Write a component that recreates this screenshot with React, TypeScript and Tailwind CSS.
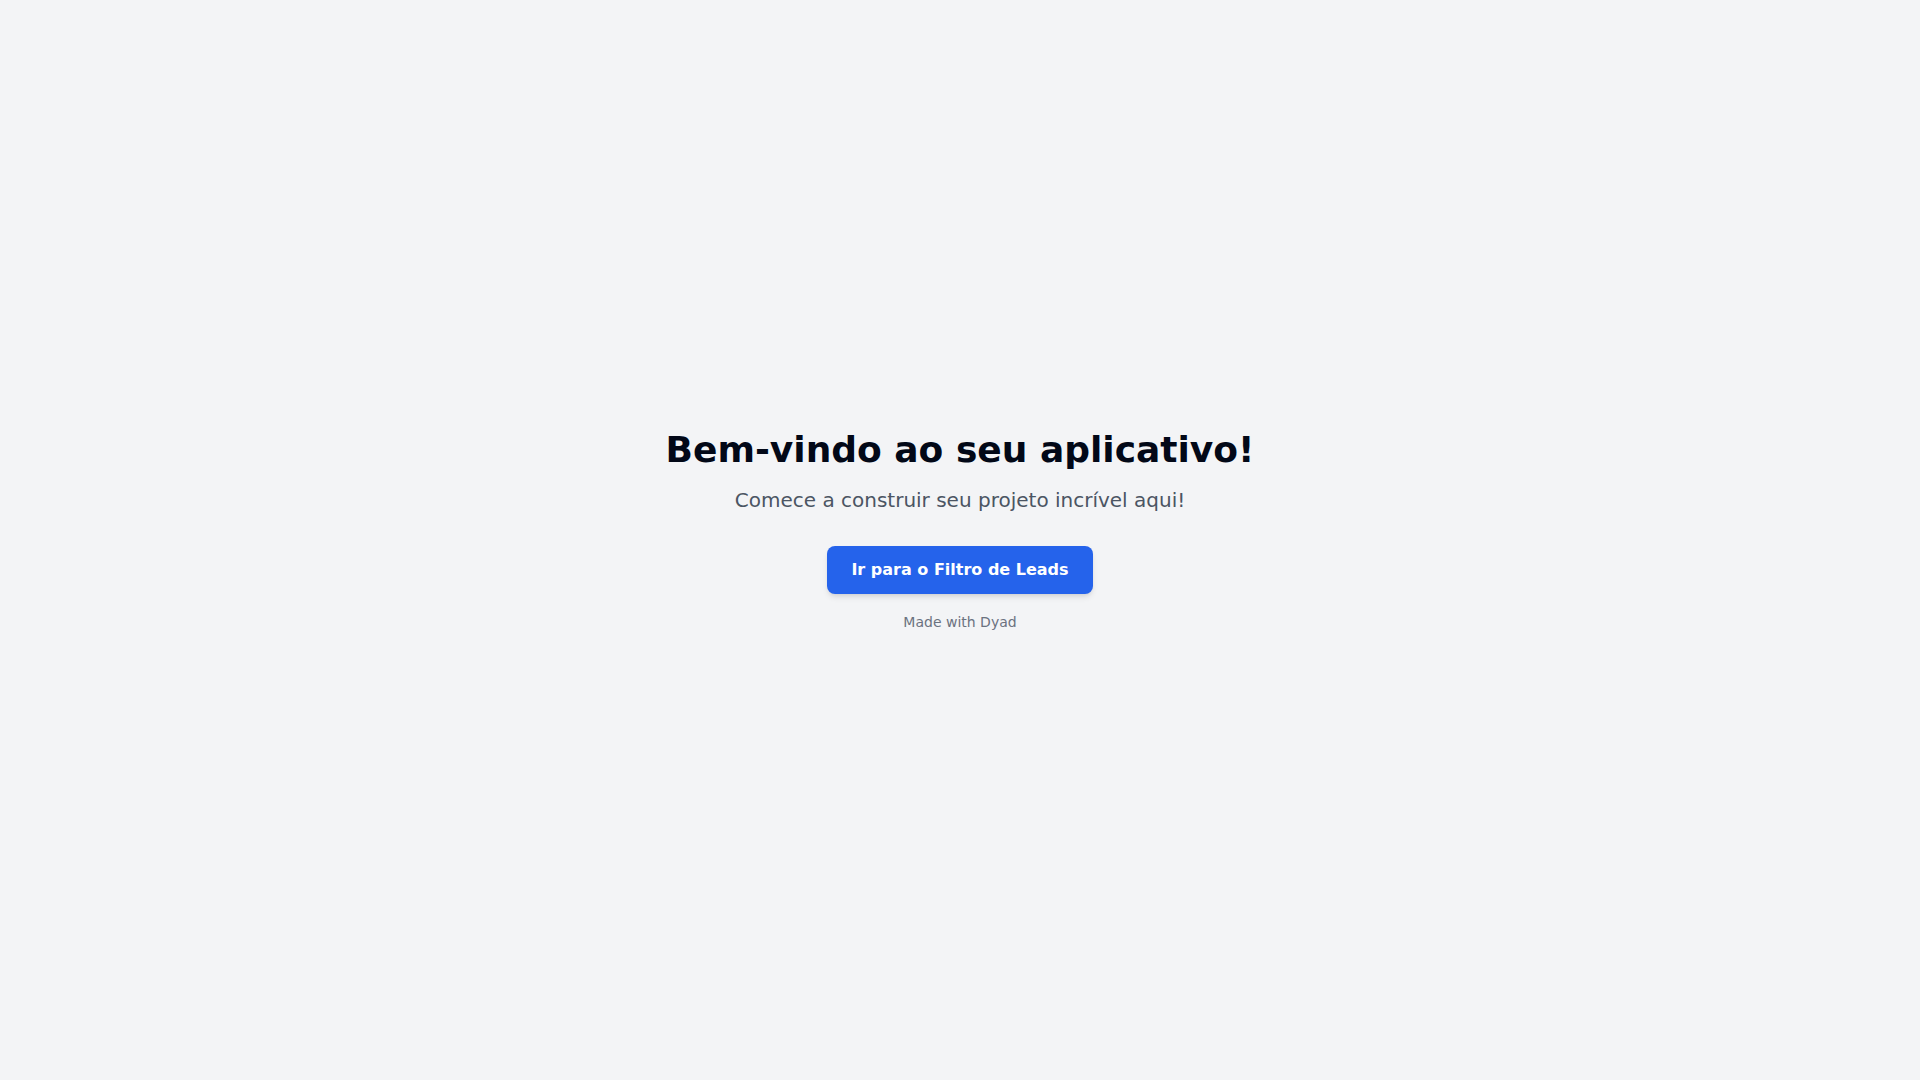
export default function App() {
  return (
    <div
      className="min-h-screen flex flex-col items-center justify-center bg-[#f3f4f6] text-[#020817]"
      style={{ fontFamily: '"DejaVu Sans", sans-serif' }}
    >
      <div className="text-center">
        <h1 className="text-4xl font-bold mb-4 text-[#020817]">Bem-vindo ao seu aplicativo!</h1>
        <p className="text-xl text-[#4b5563] mb-8">Comece a construir seu projeto incrível aqui!</p>
        <button className="bg-[#2563eb] text-white font-bold px-6 py-3 rounded-lg shadow-md">
          Ir para o Filtro de Leads
        </button>
      </div>
      <div className="p-4 text-center">
        <a className="text-sm text-[#6b7280]">Made with Dyad</a>
      </div>
    </div>
  );
}
